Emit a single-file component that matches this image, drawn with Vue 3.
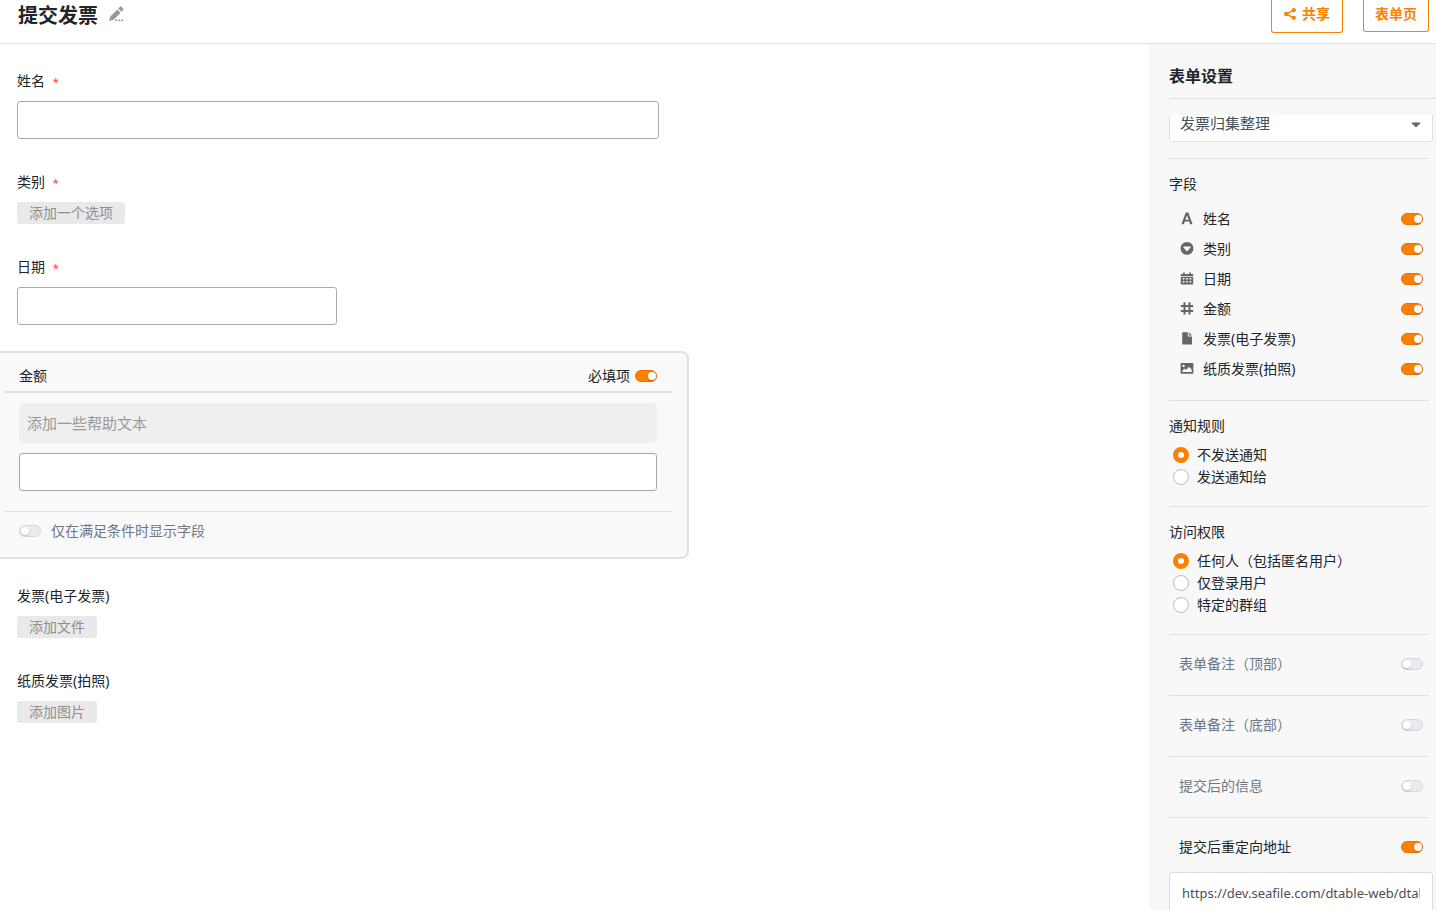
<script setup>
import { ref } from "vue";

const table = ref("发票归集整理");
const name = ref("");
const date = ref("");
const amount = ref("");
const helpText = ref("");
const amountRequired = ref(true);
const amountConditional = ref(false);

const columns = ref([
  { name: "姓名", icon: "text", shown: true },
  { name: "类别", icon: "select", shown: true },
  { name: "日期", icon: "date", shown: true },
  { name: "金额", icon: "number", shown: true },
  { name: "发票(电子发票)", icon: "file", shown: true },
  { name: "纸质发票(拍照)", icon: "image", shown: true },
]);

const notification = ref("none");
const notificationOptions = [
  { value: "none", label: "不发送通知" },
  { value: "send", label: "发送通知给" },
];

const access = ref("anyone");
const accessOptions = [
  { value: "anyone", label: "任何人（包括匿名用户）" },
  { value: "login", label: "仅登录用户" },
  { value: "groups", label: "特定的群组" },
];

const extras = ref([
  { label: "表单备注（顶部）", on: false },
  { label: "表单备注（底部）", on: false },
  { label: "提交后的信息", on: false },
  { label: "提交后重定向地址", on: true },
]);

const redirectUrl = ref("https://dev.seafile.com/dtable-web/dtable-forms/");
</script>

<template>
  <div class="form-editor">
    <header class="topbar">
      <h1>提交发票</h1>
      <button class="rename-btn" type="button" aria-label="重命名">
        <svg viewBox="0 0 16 16" width="16" height="16">
          <path d="M1 15l1.300-4.600L9.300 3.400l3.300 3.300-7 7z" />
          <path d="M10.200 2.500l1.700-1.700a1.100 1.100 0 0 1 1.600 0l1.700 1.700a1.100 1.100 0 0 1 0 1.600l-1.700 1.700z" />
          <path d="M7 13.500h2V15H7zM10.200 13.500h2V15h-2zM13.300 13.500h2V15h-2z" />
        </svg>
      </button>
      <div class="actions">
        <button class="action-btn share-btn" type="button">
          <svg viewBox="0 0 12 12" width="12" height="12">
            <path d="M9.800 2.200L2.200 6l7.600 3.800" fill="none" stroke="currentColor" stroke-width="1.400" />
            <circle cx="9.800" cy="2.200" r="2.100" />
            <circle cx="2.200" cy="6" r="2.200" />
            <circle cx="9.800" cy="9.800" r="2.100" />
          </svg>
          共享
        </button>
        <button class="action-btn" type="button">表单页</button>
      </div>
    </header>

    <div class="body">
      <main class="form-content">
        <div class="field">
          <label for="name">姓名 <span class="required">*</span></label>
          <input id="name" v-model="name" class="text-input" type="text" />
        </div>
        <div class="field">
          <div class="field-name">类别 <span class="required">*</span></div>
          <button class="add-btn" type="button">添加一个选项</button>
        </div>
        <div class="field">
          <label for="date">日期 <span class="required">*</span></label>
          <input id="date" v-model="date" class="text-input date-input" type="text" />
        </div>

        <section class="active-field">
          <div class="active-header">
            <label for="amount">金额</label>
            <label class="required-toggle">
              必填项
              <input v-model="amountRequired" class="toggle" type="checkbox" />
            </label>
          </div>
          <div class="active-body">
            <input v-model="helpText" class="help-input" type="text" placeholder="添加一些帮助文本" aria-label="帮助文本" />
            <input id="amount" v-model="amount" class="text-input" type="text" />
          </div>
          <label class="active-footer">
            <input v-model="amountConditional" class="toggle" type="checkbox" />
            仅在满足条件时显示字段
          </label>
        </section>

        <div class="field">
          <div class="field-name">发票(电子发票)</div>
          <button class="add-btn" type="button">添加文件</button>
        </div>
        <div class="field">
          <div class="field-name">纸质发票(拍照)</div>
          <button class="add-btn" type="button">添加图片</button>
        </div>
      </main>

      <aside class="settings">
        <h2>表单设置</h2>
        <div class="settings-scroll">
          <div class="section table-section">
            <div class="select-wrap">
              <select v-model="table" aria-label="表格">
                <option>发票归集整理</option>
              </select>
              <svg class="caret" viewBox="0 0 10 6" width="10" height="6">
                <path d="M0 .5h10L5 5.500z" />
              </svg>
            </div>
          </div>

          <div class="section columns-section">
            <h3>字段</h3>
            <label v-for="col in columns" :key="col.name" class="column-row">
              <svg class="column-icon" viewBox="0 0 14 14" width="14" height="14">
                <path v-if="col.icon === 'text'" d="M5.700.5h2.600l4.300 11.700h-2.500l-.9-2.700H4.800l-.9 2.700H1.400zM7 3.200L5.400 7.700h3.200z" />
                <path
                  v-else-if="col.icon === 'select'"
                  fill-rule="evenodd"
                  d="M7 0a6.400 6.400 0 1 1 0 12.800A6.400 6.400 0 0 1 7 0zM3.600 4.400a.5.5 0 0 0-.3.900l3.200 3.600a.7.7 0 0 0 1 0l3.200-3.600a.5.5 0 0 0-.3-.9z"
                />
                <path
                  v-else-if="col.icon === 'date'"
                  fill-rule="evenodd"
                  d="M3 .5h1.800V2h4.400V.5H11V2h2.200v2H.8V2H3zM.8 4.800h12.400v7.700H.8zM2.700 6v1.500h1.800V6zM6.100 6v1.500h1.800V6zM9.500 6v1.500h1.800V6zM2.700 9v1.500h1.800V9zM6.100 9v1.500h1.800V9zM9.500 9v1.500h1.800V9z"
                />
                <path
                  v-else-if="col.icon === 'number'"
                  fill-rule="evenodd"
                  d="M3.500.3h2v2.700h3V.3h2v2.700h2.700v2h-2.700v3h2.700v2h-2.700v2.400h-2V10h-3v2.400h-2V10H.8V8h2.700V5H.8V3h2.700zM5.500 5v3h3V5z"
                />
                <path v-else-if="col.icon === 'file'" d="M2.200.2h5.600v4.200h4.200v8H2.200zM8.700.2L12 3.500H8.700z" />
                <path
                  v-else
                  fill-rule="evenodd"
                  d="M1.600 1h10.800q1 0 1 1v8.700q0 1-1 1H1.600q-1 0-1-1V2q0-1 1-1zM3.600 2.700a1.200 1.200 0 1 0 0 2.400 1.200 1.200 0 0 0 0-2.400zM2.300 10h9.400V7.500L9 4.800 5.900 7.900 4.500 6.600 2.300 8.700z"
                />
              </svg>
              <span>{{ col.name }}</span>
              <input v-model="col.shown" class="toggle" type="checkbox" />
            </label>
          </div>

          <div class="section">
            <h3>通知规则</h3>
            <label v-for="opt in notificationOptions" :key="opt.value" class="radio-row">
              <input v-model="notification" type="radio" name="notification" :value="opt.value" />
              {{ opt.label }}
            </label>
          </div>

          <div class="section">
            <h3>访问权限</h3>
            <label v-for="opt in accessOptions" :key="opt.value" class="radio-row">
              <input v-model="access" type="radio" name="access" :value="opt.value" />
              {{ opt.label }}
            </label>
          </div>

          <label v-for="item in extras" :key="item.label" class="extra-row" :class="{ on: item.on }">
            <span>{{ item.label }}</span>
            <input v-model="item.on" class="toggle" type="checkbox" />
          </label>
          <input v-model="redirectUrl" class="url-input" type="text" aria-label="重定向地址" />
        </div>
      </aside>
    </div>
  </div>
</template>

<style>
body {
  margin: 0;
}
</style>

<style scoped>
.form-editor {
  display: flex;
  flex-direction: column;
  height: 100vh;
  overflow: hidden;
  font-family: "Noto Sans", "Noto Sans CJK SC", sans-serif;
  font-size: 14px;
  line-height: 20px;
  color: #212529;
  background: #fff;
}
.form-editor * {
  box-sizing: border-box;
}
button,
input,
select {
  margin: 0;
  font-family: inherit;
  font-size: 14px;
  line-height: 20px;
}
button {
  cursor: pointer;
}
h1,
h2,
h3 {
  margin: 0;
}

.topbar {
  display: flex;
  flex: none;
  align-items: flex-start;
  height: 44px;
  padding: 0 7px 0 18px;
  border-bottom: 1px solid #e0e0e0;
}
h1 {
  font-size: 20px;
  line-height: 32px;
  font-weight: 700;
}
.rename-btn {
  margin-left: 10px;
  padding: 6px 0;
  border: 0;
  background: none;
  line-height: 0;
}
.rename-btn svg {
  fill: #999;
}
.actions {
  display: flex;
  align-items: flex-start;
  gap: 20px;
  margin-left: auto;
}
.action-btn {
  display: flex;
  align-items: center;
  gap: 6px;
  padding: 4px 11px 7px;
  border: 1px solid #ff8000;
  border-top: 0;
  border-radius: 0 0 3px 3px;
  background: #fff;
  color: #ff8000;
  font-weight: 600;
}
.share-btn {
  padding: 4px 12px 8px;
}
.action-btn svg {
  fill: currentColor;
}

.body {
  display: flex;
  flex: 1;
  min-height: 0;
}
.form-content {
  flex: 1;
  min-width: 0;
  overflow: hidden;
}
.field {
  display: flex;
  flex-direction: column;
  align-items: flex-start;
  gap: 10px;
  max-width: 659px;
  padding: 27px 0 6px 17px;
}
.required {
  margin-left: 4px;
  color: #f44;
  font-size: 11px;
  line-height: 1;
}
.text-input {
  width: 100%;
  height: 38px;
  padding: 0 12px;
  border: 1px solid #aaa;
  border-radius: 3px;
  background: #fff;
}
.date-input {
  max-width: 320px;
}
.add-btn {
  height: 22px;
  padding: 0 12px;
  border: 0;
  border-radius: 3px;
  background: #e9e9e9;
  color: #8f8f8f;
}

.active-field {
  max-width: 689px;
  margin-top: 20px;
  padding: 0 15px 7px 4px;
  border: 2px solid #e0e0e0;
  border-left: 0;
  border-radius: 0 8px 8px 0;
  background: #f9f9f9;
}
.active-header {
  display: flex;
  align-items: center;
  justify-content: space-between;
  height: 40px;
  padding: 8px 15px 0;
  border-bottom: 2px solid #e0e0e0;
}
.required-toggle {
  display: flex;
  align-items: center;
  gap: 5px;
}
.active-body {
  display: flex;
  flex-direction: column;
  gap: 10px;
  padding: 10px 15px 20px;
  border-bottom: 1px solid #e0e0e0;
}
.help-input {
  width: 100%;
  height: 40px;
  padding: 0 8px;
  border: 0;
  border-radius: 5px;
  background: #efefef;
  font-size: 15px;
}
.help-input::placeholder {
  color: #999;
}
.active-footer {
  display: flex;
  align-items: center;
  gap: 10px;
  height: 38px;
  padding-left: 15px;
  color: #6e7687;
}

.toggle {
  display: flex;
  flex: none;
  align-items: center;
  width: 22px;
  height: 12px;
  padding: 0 1px;
  appearance: none;
  border: 1px solid #d3d7df;
  border-radius: 6px;
  background: #e9ecef;
}
.toggle::before {
  content: "";
  width: 8px;
  height: 8px;
  border-radius: 50%;
  background: #fff;
  box-shadow: 0 1px 2px rgba(0, 0, 0, 0.2);
}
.toggle:checked {
  justify-content: flex-end;
  padding: 0;
  border-color: #e57300;
  background: #ff8000;
}

.settings {
  display: flex;
  flex: none;
  flex-direction: column;
  width: 287px;
  padding-left: 20px;
  background: #f8f8f8;
}
h2 {
  flex: none;
  padding: 22px 0 12px;
  border-bottom: 1px solid #e0e0e0;
  font-size: 16px;
  line-height: 20px;
  font-weight: 600;
}
.settings-scroll {
  flex: 1;
  min-height: 0;
  margin-top: 16px;
  padding-right: 3px;
  overflow: hidden;
}
.section {
  margin-right: 4px;
  padding: 15px 0 18px;
  border-bottom: 1px solid #e0e0e0;
}
.table-section {
  padding: 0 0 16px;
}
/* panel is scrolled a little, so the top of the select is cut off */
.select-wrap {
  position: relative;
  margin: -11px -4px 0 0;
}
select {
  display: block;
  width: 100%;
  height: 38px;
  padding: 0 30px 0 10px;
  appearance: none;
  border: 1px solid #dee2e6;
  border-radius: 3px;
  background: #fff;
  color: #495057;
  font-size: 15px;
}
.caret {
  position: absolute;
  top: 18px;
  right: 12px;
  fill: #666;
  pointer-events: none;
}
h3 {
  margin-bottom: 8px;
  font-size: 14px;
  font-weight: 400;
}
.columns-section {
  padding-bottom: 16px;
}
.columns-section h3 {
  margin-bottom: 10px;
}
.column-row {
  display: flex;
  align-items: center;
  height: 30px;
  padding: 0 6px 0 11px;
}
.column-row span {
  margin-left: 9px;
}
.column-row .toggle,
.extra-row .toggle {
  margin-left: auto;
}
.column-icon {
  fill: #666;
}
.radio-row {
  display: flex;
  align-items: center;
  gap: 8px;
  height: 22px;
  padding-left: 4px;
}
.radio-row input {
  width: 16px;
  height: 16px;
  appearance: none;
  border: 1px solid #bbb;
  border-radius: 50%;
  background: #fff;
}
.radio-row input:checked {
  border: 5px solid #ff8000;
}
.extra-row {
  display: flex;
  align-items: center;
  height: 61px;
  margin-right: 4px;
  padding: 0 6px 2px 10px;
  border-bottom: 1px solid #e0e0e0;
  color: #6e7687;
}
.extra-row.on {
  height: 54px;
  padding-top: 4px;
  padding-bottom: 0;
  border-bottom: 0;
  color: #212529;
}
.url-input {
  width: 100%;
  height: 42px;
  padding: 0 12px;
  border: 1px solid #d8dce3;
  border-radius: 3px;
  background: #fff;
  color: #495057;
  font-size: 13px;
}
</style>
